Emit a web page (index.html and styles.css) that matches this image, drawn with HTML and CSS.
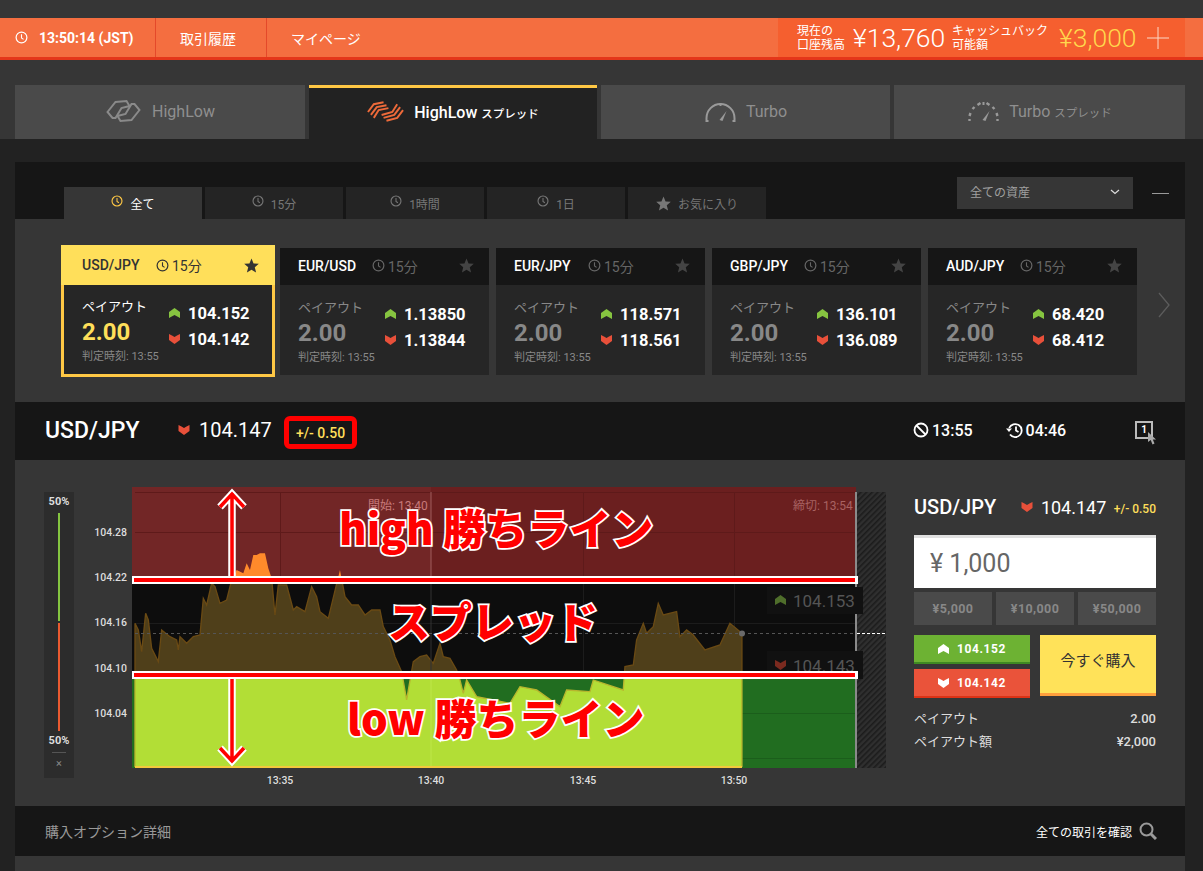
FILE: index.html
```html
<!DOCTYPE html>
<html lang="ja">
<head>
    <meta charset="UTF-8">
    <meta name="viewport" content="width=device-width, initial-scale=1.0">
    <title>HighLow スプレッド</title>
    <link rel="stylesheet" href="styles.css">
</head>
<body>

    <!-- Shared icons -->
    <svg class="icon-defs" width="0" height="0">
        <symbol id="i-up" viewBox="0 0 11 10"><path d="M0 4 5.5 0 11 4V10L5.5 7 0 10Z"/></symbol>
        <symbol id="i-down" viewBox="0 0 11 10"><path d="M0 0 3 1.5 5.5 3 8 1.5 11 0V6L5.5 10 0 6Z"/></symbol>
        <symbol id="i-clock" viewBox="0 0 14 14"><circle cx="7" cy="7" r="5.8" fill="none" stroke="currentColor" stroke-width="1.3"/><path d="M7 3.5V7.5L9.2 9" fill="none" stroke="currentColor" stroke-width="1.2"/></symbol>
        <symbol id="i-star" viewBox="0 0 16 16"><path d="M8 .5 10.2 5.8 15.8 6.2 11.5 9.8 12.9 15.4 8 12.4 3.1 15.4 4.5 9.8.2 6.2 5.8 5.8Z"/></symbol>
    </svg>

    <!-- Top bar -->
    <div class="top-wrap">
        <nav class="topbar">
            <div class="top-item top-time">
                <svg class="top-clock"><use href="#i-clock"/></svg>
                <span>13:50:14 (JST)</span>
            </div>
            <a class="top-item top-history">取引履歴</a>
            <a class="top-item top-mypage">マイページ</a>
            <div class="balance">
                <span class="balance-label">現在の<br>口座残高</span>
                <span class="balance-value">¥13,760</span>
                <span class="balance-label cashback-label">キャッシュバック<br>可能額</span>
                <span class="balance-value cashback-value">¥3,000</span>
                <svg class="balance-plus" viewBox="0 0 22 22"><path d="M11 0V22M0 11H22"/></svg>
            </div>
        </nav>

        <!-- Product tabs -->
        <div class="product-tabs">
            <a class="product-tab tab-1">
                <svg class="tab-icon" viewBox="0 0 36 24"><g fill="none" stroke="#8a8a8a" stroke-width="2"><path d="M2 13 10 3 21 2 24 7 16 9 10 19 7 19Z"/><path d="M34 11 26 21 15 22 12 17 20 15 26 5 29 5Z"/></g></svg>
                <span>HighLow</span>
            </a>
            <a class="product-tab tab-2 active">
                <svg class="tab-icon" viewBox="0 0 38 24"><g fill="none" stroke="#ee6a3a" stroke-width="2"><path d="M1 11 7 3 17 1M4 14 10 6 20 4M7 17 12 9 22 7"/><path d="M37 9 31 17 20 20M34 6 28 14 17 17M31 3 26 11 15 14"/></g></svg>
                <span>HighLow <small>スプレッド</small></span>
            </a>
            <a class="product-tab tab-3">
                <svg class="tab-icon gauge" viewBox="0 0 32 22"><g fill="none" stroke="#9a9a9a" stroke-width="2"><path d="M2 21V18A14 14 0 0 1 30 18V21M1 21H4M28 21H31"/><path d="M16 3V6"/></g><path d="M15 20 22 11 18 21Z" fill="#9a9a9a"/></svg>
                <span>Turbo</span>
            </a>
            <a class="product-tab tab-4">
                <svg class="tab-icon gauge" viewBox="0 0 32 22"><g fill="none" stroke="#9a9a9a" stroke-width="2.4"><path d="M2 21V19M2 16 3 13M5 9 7 7M10 5 13 3M19 3 22 5M25 7 27 9M29 13 30 16M30 19V21"/><path d="M16 2V5" stroke-width="2"/></g><path d="M15 20 22 11 18 21Z" fill="#9a9a9a"/></svg>
                <span>Turbo <small>スプレッド</small></span>
            </a>
        </div>
    </div>

    <main class="panel">

        <!-- Duration filter -->
        <div class="filter-bar">
            <a class="filter-tab selected"><svg class="filter-clock"><use href="#i-clock"/></svg>全て</a>
            <a class="filter-tab"><svg class="filter-clock"><use href="#i-clock"/></svg>15分</a>
            <a class="filter-tab"><svg class="filter-clock"><use href="#i-clock"/></svg>1時間</a>
            <a class="filter-tab"><svg class="filter-clock"><use href="#i-clock"/></svg>1日</a>
            <a class="filter-tab"><svg class="filter-star"><use href="#i-star"/></svg>お気に入り</a>
            <div class="asset-select">
                <span>全ての資産</span>
                <svg class="select-caret" viewBox="0 0 10 6"><path d="M1 1 5 4.5 9 1"/></svg>
            </div>
            <span class="collapse-dash"></span>
        </div>

        <!-- Asset cards -->
        <section class="cards">
            <article class="card current">
                <header class="card-head">
                    <b>USD/JPY</b>
                    <span class="card-term"><svg class="card-clock"><use href="#i-clock"/></svg>15分</span>
                    <svg class="card-star"><use href="#i-star"/></svg>
                </header>
                <div class="card-body">
                    <div class="card-payout">
                        <div class="payout-label">ペイアウト</div>
                        <div class="payout-rate">2.00</div>
                        <div class="payout-time">判定時刻: 13:55</div>
                    </div>
                    <div class="card-prices">
                        <div class="price"><svg class="arrow up"><use href="#i-up"/></svg>104.152</div>
                        <div class="price"><svg class="arrow down"><use href="#i-down"/></svg>104.142</div>
                    </div>
                </div>
            </article>
            <article class="card">
                <header class="card-head">
                    <b>EUR/USD</b>
                    <span class="card-term"><svg class="card-clock"><use href="#i-clock"/></svg>15分</span>
                    <svg class="card-star"><use href="#i-star"/></svg>
                </header>
                <div class="card-body">
                    <div class="card-payout">
                        <div class="payout-label">ペイアウト</div>
                        <div class="payout-rate">2.00</div>
                        <div class="payout-time">判定時刻: 13:55</div>
                    </div>
                    <div class="card-prices">
                        <div class="price"><svg class="arrow up"><use href="#i-up"/></svg>1.13850</div>
                        <div class="price"><svg class="arrow down"><use href="#i-down"/></svg>1.13844</div>
                    </div>
                </div>
            </article>
            <article class="card">
                <header class="card-head">
                    <b>EUR/JPY</b>
                    <span class="card-term"><svg class="card-clock"><use href="#i-clock"/></svg>15分</span>
                    <svg class="card-star"><use href="#i-star"/></svg>
                </header>
                <div class="card-body">
                    <div class="card-payout">
                        <div class="payout-label">ペイアウト</div>
                        <div class="payout-rate">2.00</div>
                        <div class="payout-time">判定時刻: 13:55</div>
                    </div>
                    <div class="card-prices">
                        <div class="price"><svg class="arrow up"><use href="#i-up"/></svg>118.571</div>
                        <div class="price"><svg class="arrow down"><use href="#i-down"/></svg>118.561</div>
                    </div>
                </div>
            </article>
            <article class="card">
                <header class="card-head">
                    <b>GBP/JPY</b>
                    <span class="card-term"><svg class="card-clock"><use href="#i-clock"/></svg>15分</span>
                    <svg class="card-star"><use href="#i-star"/></svg>
                </header>
                <div class="card-body">
                    <div class="card-payout">
                        <div class="payout-label">ペイアウト</div>
                        <div class="payout-rate">2.00</div>
                        <div class="payout-time">判定時刻: 13:55</div>
                    </div>
                    <div class="card-prices">
                        <div class="price"><svg class="arrow up"><use href="#i-up"/></svg>136.101</div>
                        <div class="price"><svg class="arrow down"><use href="#i-down"/></svg>136.089</div>
                    </div>
                </div>
            </article>
            <article class="card">
                <header class="card-head">
                    <b>AUD/JPY</b>
                    <span class="card-term"><svg class="card-clock"><use href="#i-clock"/></svg>15分</span>
                    <svg class="card-star"><use href="#i-star"/></svg>
                </header>
                <div class="card-body">
                    <div class="card-payout">
                        <div class="payout-label">ペイアウト</div>
                        <div class="payout-rate">2.00</div>
                        <div class="payout-time">判定時刻: 13:55</div>
                    </div>
                    <div class="card-prices">
                        <div class="price"><svg class="arrow up"><use href="#i-up"/></svg>68.420</div>
                        <div class="price"><svg class="arrow down"><use href="#i-down"/></svg>68.412</div>
                    </div>
                </div>
            </article>
            <svg class="cards-next" viewBox="0 0 12 26"><path d="M1 1 11 13 1 25"/></svg>
        </section>

        <!-- Selected asset header -->
        <section class="asset-bar">
            <h2 class="asset-name">USD/JPY</h2>
            <svg class="arrow down asset-arrow"><use href="#i-down"/></svg>
            <span class="asset-price">104.147</span>
            <span class="spread-badge">+/- 0.50</span>
            <span class="asset-clock">
                <svg class="clock-icon" viewBox="0 0 16 16"><g fill="none" stroke="#fff" stroke-width="1.8"><circle cx="8" cy="8" r="6.5"/><path d="M3.5 3.5 12.5 12.5"/></g></svg>13:55
            </span>
            <span class="asset-clock asset-remain">
                <svg class="clock-icon wide" viewBox="0 0 17 16"><g fill="none" stroke="#fff" stroke-width="1.8"><path d="M3.2 6A6.5 6.5 0 1 1 4 12.5"/><path d="M10 4.5V8.5L12.5 10"/></g><path d="M0 6.5H6L3 10Z" fill="#fff"/></svg>04:46
            </span>
            <span class="one-click">
                <span class="one-click-box">1</span>
                <svg class="one-click-cursor" viewBox="0 0 10 13"><path d="M0 0V10L2.7 8 4.5 12.5 6.5 11.5 4.8 7.5H8Z"/></svg>
            </span>
        </section>

        <!-- Chart and order form -->
        <section class="trade">
            <div class="sentiment">
                <span class="sentiment-num">50%</span>
                <span class="sentiment-bar high"></span>
                <span class="sentiment-bar low"></span>
                <span class="sentiment-num">50%</span>
                <span class="sentiment-close">×</span>
            </div>

            <svg class="chart" width="800" height="303" viewBox="90 487 800 303">
                <defs>
                    <pattern id="hatch" width="4" height="4" patternUnits="userSpaceOnUse" patternTransform="rotate(45)">
                        <rect width="4" height="4" fill="#2f2f2f"/>
                        <rect width="1.6" height="4" fill="#1c1c1c"/>
                    </pattern>
                    <clipPath id="zone-high"><rect x="132" y="487" width="724" height="93"/></clipPath>
                    <clipPath id="zone-mid"><rect x="132" y="580" width="724" height="95"/></clipPath>
                    <clipPath id="zone-low"><rect x="132" y="675" width="724" height="92"/></clipPath>
                    <path id="price-area" transform="translate(30 480) scale(.3333)" d="M315 430 325 450 335 515 347 400 355 420 365 505 385 545 395 450 420 470 440 480 445 510 450 470 470 490 490 470 510 465 520 355 530 375 545 310 555 320 570 370 590 360 605 300 620 270 640 280 650 250 660 270 670 225 680 225 690 220 705 220 715 265 725 295 735 405 745 315 770 315 790 390 800 380 825 395 845 320 860 350 870 395 895 415 930 270 945 350 965 375 985 375 1005 405 1025 390 1050 390 1060 440 1080 480 1095 530 1115 575 1130 660 1150 545 1170 530 1190 525 1210 550 1230 490 1240 530 1260 535 1280 570 1290 600 1300 640 1310 600 1340 650 1390 660 1440 670 1470 620 1520 630 1590 680 1610 630 1680 635 1690 600 1780 630 1785 560 1810 555 1820 480 1840 430 1850 460 1870 440 1885 370 1900 405 1940 395 1950 470 1970 450 1990 465 2025 510 2070 495 2100 430 2136 460V860H315Z"/>
                </defs>

                <!-- zones -->
                <rect x="857" y="492" width="29" height="276" fill="url(#hatch)"/>
                <rect x="132" y="487" width="299" height="93" fill="#722626"/>
                <rect x="431" y="487" width="425" height="93" fill="#6b1f1f"/>
                <rect x="132" y="580" width="724" height="95" fill="#0d0d0d"/>
                <rect x="132" y="675" width="724" height="93" fill="#216d20"/>

                <!-- grid -->
                <path class="grid-high" d="M135 492.5H856M135 532.5H856M280.5 492V580M583.5 492V580M734.5 492V580"/>
                <path class="grid-mid" d="M280.5 580V675M583.5 580V675M734.5 580V675M135 623.5H856"/>
                <path class="grid-low" d="M742 713.5H856M742 758.5H856"/>

                <!-- price area, one path cut by the three zones -->
                <g clip-path="url(#zone-high)"><use href="#price-area" class="area-high"/></g>
                <g clip-path="url(#zone-mid)"><use href="#price-area" class="area-mid"/></g>
                <g clip-path="url(#zone-low)"><use href="#price-area" class="area-low"/></g>
                <rect x="135" y="766" width="607" height="2" fill="#f2c83c"/>

                <path d="M431 492V580" stroke="#a05c5c" stroke-width="1"/>
                <path d="M431 580V675" stroke="#333" stroke-width="1"/>
                <path d="M431 675V766" stroke="#bde648" stroke-width="1"/>
                <rect x="855" y="492" width="2" height="276" fill="#8a8a8a"/>

                <!-- live line -->
                <path class="live-dash" d="M135 633.5H742M742 633.5H856"/>
                <path class="live-dash-white" d="M857 633.5H886"/>
                <circle cx="742" cy="633.5" r="3" fill="#6a6a6a"/>

                <!-- high and low price tags -->
                <rect x="767" y="587" width="96" height="27" fill="#111"/>
                <use href="#i-up" x="775" y="595" width="11" height="10" fill="#4f6e2b"/>
                <text class="tag-text" x="793" y="607">104.153</text>
                <rect x="767" y="651" width="96" height="28" fill="#111"/>
                <use href="#i-down" x="775" y="660" width="11" height="10" fill="#7b2a1f"/>
                <text class="tag-text" x="793" y="672">104.143</text>

                <!-- labels -->
                <text class="chart-note" x="368" y="510">開始: 13:40</text>
                <text class="chart-note dim" x="793" y="510">締切: 13:54</text>
                <text class="axis-y" x="127" y="536">104.28</text>
                <text class="axis-y" x="127" y="581">104.22</text>
                <text class="axis-y" x="127" y="626">104.16</text>
                <text class="axis-y" x="127" y="672">104.10</text>
                <text class="axis-y" x="127" y="717">104.04</text>
                <text class="axis-x" x="280" y="784">13:35</text>
                <text class="axis-x" x="431" y="784">13:40</text>
                <text class="axis-x" x="583" y="784">13:45</text>
                <text class="axis-x" x="734" y="784">13:50</text>

                <!-- red annotations on top of the chart -->
                <rect x="132" y="576" width="726" height="8" fill="#fff"/>
                <rect x="134" y="578" width="721" height="4" fill="#f00"/>
                <rect x="132" y="671" width="726" height="8" fill="#fff"/>
                <rect x="134" y="673" width="721" height="4" fill="#f00"/>
                <path class="note-arrow-back" d="M232 576V493M220 507 232 494 244 507"/>
                <path class="note-arrow" d="M232 576V493M220 507 232 494 244 507"/>
                <path class="note-arrow-back" d="M232 679V762M220 748 232 761 244 748"/>
                <path class="note-arrow" d="M232 679V762M220 748 232 761 244 748"/>
                <text class="note-text" x="339" y="545">high 勝ちライン</text>
                <text class="note-text" x="388" y="638">スプレッド</text>
                <text class="note-text" x="347" y="735">low 勝ちライン</text>
            </svg>

            <aside class="order">
                <div class="order-head">
                    <b class="order-name">USD/JPY</b>
                    <svg class="arrow down order-arrow"><use href="#i-down"/></svg>
                    <span class="order-price">104.147</span>
                    <span class="order-spread">+/- 0.50</span>
                </div>
                <div class="amount">¥ 1,000</div>
                <div class="quick-amounts">
                    <a class="quick">¥5,000</a>
                    <a class="quick">¥10,000</a>
                    <a class="quick">¥50,000</a>
                </div>
                <div class="order-actions">
                    <div class="direction">
                        <a class="dir-btn dir-high"><svg class="arrow"><use href="#i-up"/></svg>104.152</a>
                        <a class="dir-btn dir-low"><svg class="arrow"><use href="#i-down"/></svg>104.142</a>
                    </div>
                    <a class="buy-btn">今すぐ購入</a>
                </div>
                <div class="order-row"><span>ペイアウト</span><b>2.00</b></div>
                <div class="order-row"><span>ペイアウト額</span><b>¥2,000</b></div>
            </aside>
        </section>

        <!-- Purchase details -->
        <section class="details-bar">
            <span class="details-title">購入オプション詳細</span>
            <a class="details-link">全ての取引を確認</a>
            <svg class="details-search" viewBox="0 0 18 18"><g fill="none" stroke="#9a9a9a"><circle cx="7.5" cy="7.5" r="6" stroke-width="2"/><path d="M12 12 17 17" stroke-width="3"/></g></svg>
        </section>
        <div class="panel-tail"></div>
    </main>

</body>
</html>
```

FILE: styles.css
```css
* {
    box-sizing: border-box;
}
body {
    margin: 0;
    height: 871px;
    overflow: hidden;
    background-color: #222;
    color: #fff;
    font-family: Roboto, "Noto Sans CJK JP", sans-serif;
}
a {
    color: inherit;
    text-decoration: none;
}
.icon-defs {
    position: absolute;
}

/* Top bar */
.top-wrap {
    background-color: #363636;
    padding-top: 18px;
}
.topbar {
    display: flex;
    height: 42px;
    background-color: #f46e40;
    border-bottom: 3px solid #e4361a;
    align-items: stretch;
}
.top-item {
    display: flex;
    align-items: center;
    font-size: 14px;
    border-right: 1px solid #e4492a;
}
.top-time {
    width: 156px;
    padding-left: 15px;
    font-size: 14px;
    font-weight: 700;
}
.top-clock {
    width: 13px;
    height: 13px;
    margin-right: 11px;
}
.top-history {
    width: 111px;
    padding-left: 24px;
}
.top-mypage {
    padding-left: 24px;
    border-right: none;
}
.balance {
    display: flex;
    align-items: center;
    width: 407px;
    margin-left: auto;
    margin-right: 18px;
    padding-left: 19px;
    background-color: #f55f2f;
}
.balance-label {
    font-size: 12px;
    line-height: 14px;
    width: 56px;
}
.balance-value {
    font-size: 26.5px;
    font-weight: 300;
    width: 99px;
}
.cashback-label {
    width: 107px;
}
.cashback-value {
    width: 88px;
    color: #ffd84d;
}
.balance-plus {
    width: 22px;
    height: 22px;
    fill: none;
    stroke: #fbd9c8;
    stroke-width: 1;
}

/* Product tabs */
.product-tabs {
    display: flex;
    padding: 25px 18px 0 15px;
}
.product-tab {
    display: flex;
    align-items: center;
    justify-content: center;
    height: 54px;
    padding-bottom: 2px;
    background-color: #4a4a4a;
    color: #8f8f8f;
    font-size: 16px;
}
.product-tab small {
    font-size: 11.5px;
}
.tab-1 {
    width: 290px;
    margin-right: 4px;
}
.tab-2 {
    width: 288px;
    margin-right: 4px;
}
.tab-3 {
    width: 289px;
    margin-right: 4px;
}
.tab-4 {
    width: 291px;
}
.product-tab.active {
    background-color: #222;
    border-top: 3px solid #ffc845;
    color: #fff;
    font-weight: 500;
}
.tab-icon {
    width: 37px;
    height: 24px;
    margin-right: 10px;
}
.gauge {
    width: 33px;
    height: 22px;
    margin-right: 9px;
}

/* Panel */
.panel {
    margin: 23px 18px 0 15px;
    background-color: #363636;
}
.filter-bar {
    display: flex;
    align-items: flex-end;
    height: 57px;
    padding-left: 49px;
    background-color: #161616;
}
.filter-tab {
    display: flex;
    align-items: center;
    justify-content: center;
    width: 138px;
    height: 32px;
    margin-right: 3px;
    background-color: #242424;
    color: #777;
    font-size: 12px;
}
.filter-tab.selected {
    background-color: #363636;
    color: #fff;
}
.filter-clock {
    width: 12px;
    height: 12px;
    margin: -4px 7px 0 0;
    color: #777;
}
.selected .filter-clock {
    color: #ffc845;
}
.filter-star {
    width: 15px;
    height: 15px;
    margin-right: 7px;
    fill: #777;
}
.asset-select {
    display: flex;
    align-items: center;
    justify-content: space-between;
    width: 176px;
    height: 32px;
    margin: 0 0 10px auto;
    padding: 0 13px 3px;
    background-color: #363636;
    color: #a0a0a0;
    font-size: 12px;
}
.select-caret {
    width: 10px;
    height: 6px;
    fill: none;
    stroke: #ddd;
    stroke-width: 1.2;
}
.collapse-dash {
    width: 17px;
    height: 1px;
    margin: 0 16px 25px 19px;
    background-color: #999;
}

/* Cards */
.cards {
    display: flex;
    align-items: flex-start;
    height: 183px;
    padding: 26px 0 0 46px;
}
.card {
    width: 209px;
    height: 127px;
    margin: 3px 7px 0 0;
    background-color: #262626;
}
.card-head {
    display: flex;
    align-items: center;
    height: 37px;
    padding: 0 15px 2px 18px;
    background-color: #161616;
    font-size: 14px;
}
.card-head b {
    width: 74px;
    font-weight: 500;
}
.card-term {
    display: flex;
    align-items: center;
    color: #666;
    font-size: 14px;
}
.card-clock {
    width: 13px;
    height: 13px;
    margin-right: 3px;
}
.card-star {
    width: 15px;
    height: 15px;
    margin-left: auto;
    fill: #444;
}
.card-body {
    display: flex;
    padding: 14px 0 0 18px;
}
.card-payout {
    width: 87px;
    white-space: nowrap;
}
.payout-label {
    height: 18px;
    font-size: 13px;
    line-height: 18px;
    color: #888;
}
.payout-rate {
    height: 32px;
    font-size: 24px;
    font-weight: 700;
    line-height: 32px;
    color: #888;
}
.payout-time {
    margin-top: 2px;
    font-size: 11px;
    line-height: 14px;
    color: #888;
}
.card-prices {
    padding-top: 2px;
}
.price {
    display: flex;
    align-items: center;
    height: 26px;
    font-size: 16.5px;
    font-weight: 700;
}
.arrow {
    width: 11px;
    height: 10px;
    margin-right: 8px;
}
.arrow.up {
    fill: #86c440;
}
.arrow.down {
    fill: #e8503a;
}
.card.current {
    width: 214px;
    height: 132px;
    margin: 0 5px 0 0;
    border: 3px solid #ffc845;
    border-top: none;
}
.current .card-head {
    height: 40px;
    margin: 0 -3px;
    padding: 0 16px 0 21px;
    background-color: #ffdf5a;
    color: #333;
}
.current .card-term {
    color: #333;
}
.current .card-star {
    fill: #333;
}
.current .card-body {
    padding-left: 18px;
    padding-top: 13px;
}
.current .payout-label {
    color: #fff;
}
.current .payout-rate {
    color: #ffdf5a;
}
.cards-next {
    width: 12px;
    height: 26px;
    margin: 47px 0 0 14px;
    fill: none;
    stroke: #5c5c5c;
    stroke-width: 1.3;
}

/* Selected asset */
.asset-bar {
    display: flex;
    align-items: center;
    height: 58px;
    padding-left: 30px;
    padding-bottom: 2px;
    background-color: #161616;
}
.asset-name {
    width: 133px;
    margin: 0;
    font-size: 23px;
    font-weight: 500;
}
.asset-arrow {
    width: 12px;
    margin-right: 9px;
}
.asset-price {
    width: 85px;
    font-size: 20px;
}
.spread-badge {
    display: flex;
    align-items: center;
    justify-content: center;
    width: 73px;
    height: 33px;
    margin-top: 5px;
    border: 5px solid #f00;
    border-radius: 6px;
    background-color: #161616;
    color: #ffdf5a;
    font-size: 14px;
    font-weight: 500;
}
.asset-clock {
    display: flex;
    align-items: center;
    margin-left: 556px;
    font-size: 16px;
    font-weight: 500;
}
.asset-remain {
    margin-left: 35px;
}
.clock-icon {
    width: 16px;
    height: 16px;
    margin-right: 3px;
}
.clock-icon.wide {
    width: 17px;
    margin-right: 3px;
    margin-left: -2px;
}
.one-click {
    position: relative;
    margin-left: 69px;
    width: 18px;
    height: 18px;
}
.one-click-box {
    display: block;
    width: 18px;
    height: 18px;
    border: 2px solid #bbb;
    font-size: 10px;
    font-weight: 700;
    line-height: 14px;
    text-align: center;
}
.one-click-cursor {
    position: absolute;
    left: 13px;
    top: 11px;
    width: 10px;
    height: 13px;
    fill: #aaa;
}

/* Trade area */
.trade {
    display: flex;
    align-items: flex-start;
    height: 346px;
    padding: 27px 0 0 29px;
}
.sentiment {
    display: flex;
    flex-direction: column;
    align-items: center;
    width: 30px;
    height: 286px;
    margin: 5px 16px 0 0;
    background-color: #2c2c2c;
    font-size: 11px;
    font-weight: 700;
    color: #ddd;
}
.sentiment-num {
    height: 16px;
    line-height: 20px;
}
.sentiment-bar {
    width: 2px;
    height: 108px;
    margin-top: 5px;
}
.sentiment-bar.high {
    background-color: #84c440;
}
.sentiment-bar.low {
    height: 108px;
    margin: 2px 0 0;
    background-color: #ea5a30;
}
.sentiment-close {
    width: 14px;
    margin-top: 5px;
    border-top: 1px solid #555;
    padding-top: 4px;
    color: #888;
    font-weight: 400;
    text-align: center;
}
.chart {
    flex: none;
    display: block;
}
.grid-high {
    fill: none;
    stroke: #5e1a1a;
    stroke-width: 1;
}
.grid-mid {
    fill: none;
    stroke: #1c1c1c;
    stroke-width: 1;
}
.grid-low {
    fill: none;
    stroke: #1b5e1b;
    stroke-width: 1;
}
.area-high {
    fill: #ff8a2b;
}
.area-mid {
    fill: #4f3f1a;
    stroke: #6a4a14;
    stroke-width: 4;
}
.area-low {
    fill: #b2de36;
    stroke: #b8b52e;
    stroke-width: 4;
}
.live-dash {
    fill: none;
    stroke: #555;
    stroke-width: 1;
    stroke-dasharray: 3 3;
}
.live-dash-white {
    fill: none;
    stroke: #fff;
    stroke-width: 1;
    stroke-dasharray: 3 2;
}
.tag-text {
    fill: #555;
    font-size: 17px;
}
.chart-note {
    fill: #c87a7a;
    font-size: 12px;
}
.chart-note.dim {
    fill: #a86262;
}
.axis-y {
    fill: #ddd;
    font-size: 10.5px;
    font-weight: 500;
    text-anchor: end;
}
.axis-x {
    fill: #ddd;
    font-size: 10.5px;
    font-weight: 500;
    text-anchor: middle;
}
.note-arrow-back {
    fill: none;
    stroke: #fff;
    stroke-width: 7.5;
}
.note-arrow {
    fill: none;
    stroke: #f00;
    stroke-width: 3.5;
}
.note-text {
    fill: #f00;
    stroke: #fff;
    stroke-width: 3.5;
    paint-order: stroke;
    font-family: "Noto Sans CJK JP", sans-serif;
    font-size: 42px;
    font-weight: 900;
}

/* Order form */
.order {
    width: 242px;
    margin-left: 24px;
}
.order-head {
    display: flex;
    align-items: center;
    height: 40px;
}
.order-name {
    width: 107px;
    font-size: 20px;
    font-weight: 500;
}
.order-arrow {
    width: 12px;
    margin-right: 8px;
}
.order-price {
    width: 73px;
    font-size: 18px;
}
.order-spread {
    padding-top: 4px;
    color: #ffdf5a;
    font-size: 12px;
    font-weight: 500;
    white-space: nowrap;
}
.amount {
    height: 53px;
    margin-top: 8px;
    padding-left: 16px;
    background-color: #fff;
    border-top: 3px solid #e0e0e0;
    color: #666;
    font-size: 25px;
    line-height: 52px;
}
.quick-amounts {
    display: flex;
    gap: 4px;
    margin-top: 4px;
}
.quick {
    width: 78px;
    height: 33px;
    background-color: #4a4a4a;
    color: #888;
    font-size: 12.5px;
    font-weight: 700;
    letter-spacing: .4px;
    line-height: 33px;
    text-align: center;
}
.order-actions {
    display: flex;
    justify-content: space-between;
    margin-top: 10px;
}
.direction {
    width: 116px;
}
.dir-btn {
    display: flex;
    align-items: center;
    justify-content: center;
    height: 29px;
    font-size: 12px;
    font-weight: 700;
    letter-spacing: .6px;
    fill: #fff;
}
.dir-high {
    background-color: #6db233;
    border-bottom: 2px solid #3f8a22;
    margin-bottom: 5px;
}
.dir-low {
    background-color: #ea533a;
    border-bottom: 2px solid #dd3216;
}
.buy-btn {
    width: 116px;
    height: 61px;
    background-color: #ffe259;
    border-bottom: 3px solid #ff9f3c;
    color: #333;
    font-size: 15px;
    line-height: 53px;
    text-align: center;
}
.order-row {
    display: flex;
    justify-content: space-between;
    height: 23px;
    color: #ddd;
    font-size: 13px;
    line-height: 23px;
}
.order-row b {
    font-weight: 500;
}
.order-row:first-of-type {
    margin-top: 9px;
}
.order-actions + .order-row {
    margin-top: 9px;
}

/* Details */
.details-bar {
    display: flex;
    align-items: center;
    height: 50px;
    padding: 0 28px 0 30px;
    background-color: #161616;
}
.details-title {
    color: #999;
    font-size: 14px;
}
.details-link {
    margin-left: auto;
    font-size: 12px;
}
.details-search {
    width: 18px;
    height: 18px;
    margin-left: 7px;
}
.panel-tail {
    height: 15px;
}
```
